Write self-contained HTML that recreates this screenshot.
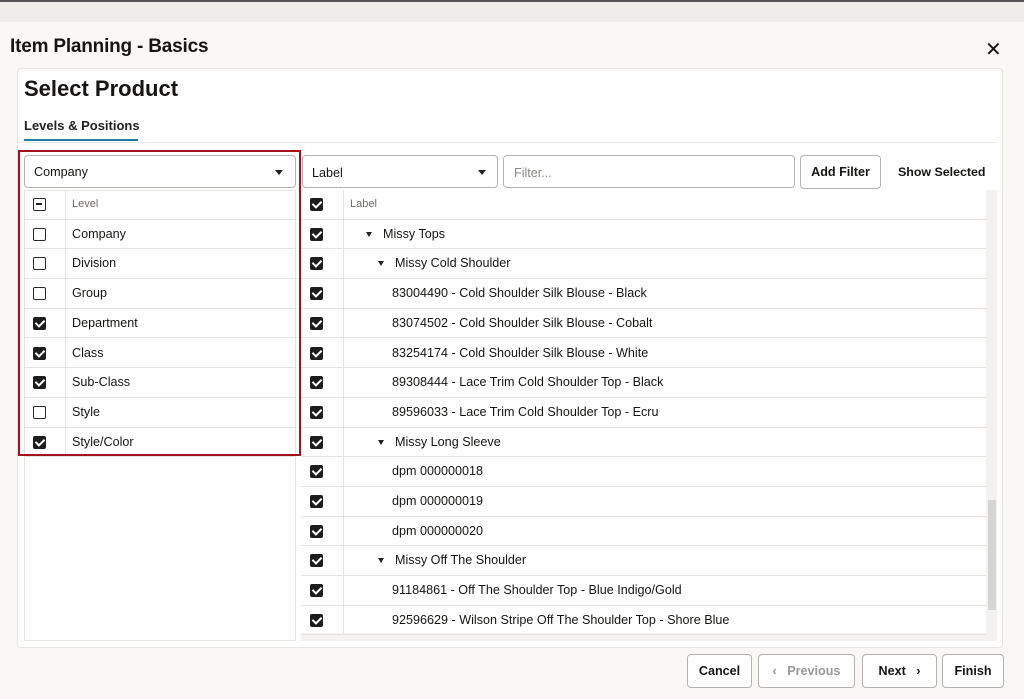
<!DOCTYPE html>
<html><head><meta charset="utf-8"><style>
*{box-sizing:border-box;margin:0;padding:0}
body{width:1024px;height:699px;background:#f9f8f6;font-family:"Liberation Sans",sans-serif;color:#161513;position:relative;overflow:hidden;font-size:12.6px}
.a{position:absolute}
.topbar{left:0;top:0;width:1024px;height:22px;background:#efedea;border-top:2px solid #555}
.card{left:17px;top:68px;width:986px;height:580px;background:#fff;border:1px solid #e8e6e3;border-radius:4px}
.sel{border:1px solid #b5b3b0;border-radius:4px;background:#fff;height:33px}
.cb{width:13px;height:13px;border:1.5px solid #2a2a2a;border-radius:2px;background:#fff}
.cb.on{background:#1d1d1d;border-color:#1d1d1d}
.cb.on::after{content:"";position:absolute;left:3px;top:0px;width:4px;height:7px;border:solid #fff;border-width:0 2px 2px 0;transform:rotate(45deg)}
.row{height:29.7px;border-bottom:1px solid #e6e4e1;position:absolute;display:flex;align-items:center}
.btn{border:1px solid #b5b3b0;border-radius:4px;background:#fff;height:34px;font-weight:bold;font-size:12.6px;display:flex;align-items:center;justify-content:center}
.caret{width:0;height:0;border-left:4px solid transparent;border-right:4px solid transparent;border-top:5px solid #222;display:inline-block}
</style></head><body>
<div class="a topbar"></div>
<div class="a" style="left:10px;top:36px;font-size:19px;font-weight:bold;letter-spacing:-0.2px">Item Planning - Basics</div>
<div class="a" style="left:985px;top:37px;font-size:20px">✕</div>
<div class="a card"></div>
<div class="a" style="left:24px;top:76px;font-size:22px;font-weight:bold">Select Product</div>
<div class="a" style="left:24px;top:118px;font-size:13px;font-weight:bold;color:#222">Levels &amp; Positions</div>
<div class="a" style="left:24px;top:139px;width:114px;height:2px;background:#227c9d"></div>
<div class="a" style="left:17px;top:142px;width:980px;height:1px;background:#eceae7"></div>

<div class="a sel" style="left:24px;top:155px;width:272px"><span class="a" style="left:9px;top:9px">Company</span><span class="a caret" style="left:250px;top:14px"></span></div>
<div class="a sel" style="left:302px;top:155px;width:196px"><span class="a" style="left:9px;top:10px">Label</span><span class="a caret" style="left:175px;top:14px"></span></div>
<div class="a sel" style="left:503px;top:155px;width:292px"><span class="a" style="left:10px;top:10px;color:#8a8886">Filter...</span></div>
<div class="a btn" style="left:800px;top:155px;width:81px">Add Filter</div>
<div class="a" style="left:898px;top:165px;font-weight:bold;font-size:12.4px">Show Selected</div>

<div class="a" style="left:24px;top:190px;width:272px;height:451px;border:1px solid #e6e4e1;background:#fff"></div>
<div class="a" style="left:65px;top:190px;width:1px;height:265px;background:#e6e4e1"></div>
<div id="L"></div>
<div class="a" style="left:301px;top:190px;width:696px;height:451px;background:#f3f2f0"></div>
<div class="a" style="left:301px;top:190px;width:685px;height:443px;background:#fff"></div>
<div class="a" style="left:343px;top:190px;width:1px;height:443px;background:#e6e4e1"></div>
<div class="a" style="left:988px;top:500px;width:8px;height:110px;background:#d6d5d3"></div>
<div id="R"></div>
<div class="a" style="left:18px;top:150px;width:283px;height:306px;border:2.5px solid #a5121b"></div>

<div class="a btn" style="left:687px;top:654px;width:65px">Cancel</div>
<div class="a btn" style="left:758px;top:654px;width:97px;color:#9a9896">&lsaquo;&nbsp;&nbsp; Previous</div>
<div class="a btn" style="left:862px;top:654px;width:75px">Next&nbsp;&nbsp; &rsaquo;</div>
<div class="a btn" style="left:942px;top:654px;width:62px">Finish</div>
<script>
var L=[["Level",2],["Company",0],["Division",0],["Group",0],["Department",1],["Class",1],["Sub-Class",1],["Style",0],["Style/Color",1]];
var h="";
L.forEach(function(r,i){var y=190+i*29.7;
var cb=r[1]==2?'<span class="a cb" style="left:8px;top:8px"><span class="a" style="left:2px;top:4px;width:6px;height:1.5px;background:#222"></span></span>':'<span class="a cb'+(r[1]?' on':'')+'" style="left:8px;top:8px"></span>';
h+='<div class="row" style="left:25px;top:'+y+'px;width:270px">'+cb+'<span class="a" style="left:47px;top:'+(i?7:8)+'px;'+(i?'':'font-size:11px;color:#6f6d6a')+'">'+r[0]+'</span></div>';});
document.getElementById("L").innerHTML=h;
var R=[["Label",0,1],["Missy Tops",1],["Missy Cold Shoulder",2],["83004490 - Cold Shoulder Silk Blouse - Black",3],["83074502 - Cold Shoulder Silk Blouse - Cobalt",3],["83254174 - Cold Shoulder Silk Blouse - White",3],["89308444 - Lace Trim Cold Shoulder Top - Black",3],["89596033 - Lace Trim Cold Shoulder Top - Ecru",3],["Missy Long Sleeve",2],["dpm 000000018",3],["dpm 000000019",3],["dpm 000000020",3],["Missy Off The Shoulder",2],["91184861 - Off The Shoulder Top - Blue Indigo/Gold",3],["92596629 - Wilson Stripe Off The Shoulder Top - Shore Blue",3]];
h="";
R.forEach(function(r,i){var y=190+i*29.7;var x=r[1]==0?49:r[1]==1?82:r[1]==2?94:91;
var c=(r[1]==1||r[1]==2)?'<span class="a caret" style="left:'+(r[1]==1?65:77)+'px;top:12px;border-width:5px 3.5px 0 3.5px"></span>':'';
h+='<div class="row" style="left:301px;top:'+y+'px;width:685px"><span class="a cb on" style="left:9px;top:8px"></span>'+c+'<span class="a" style="left:'+x+'px;top:'+(i?7:8)+'px;'+(i?'':'font-size:11px;color:#6f6d6a')+'">'+r[0]+'</span></div>';});
document.getElementById("R").innerHTML=h;
</script>
</body></html>
